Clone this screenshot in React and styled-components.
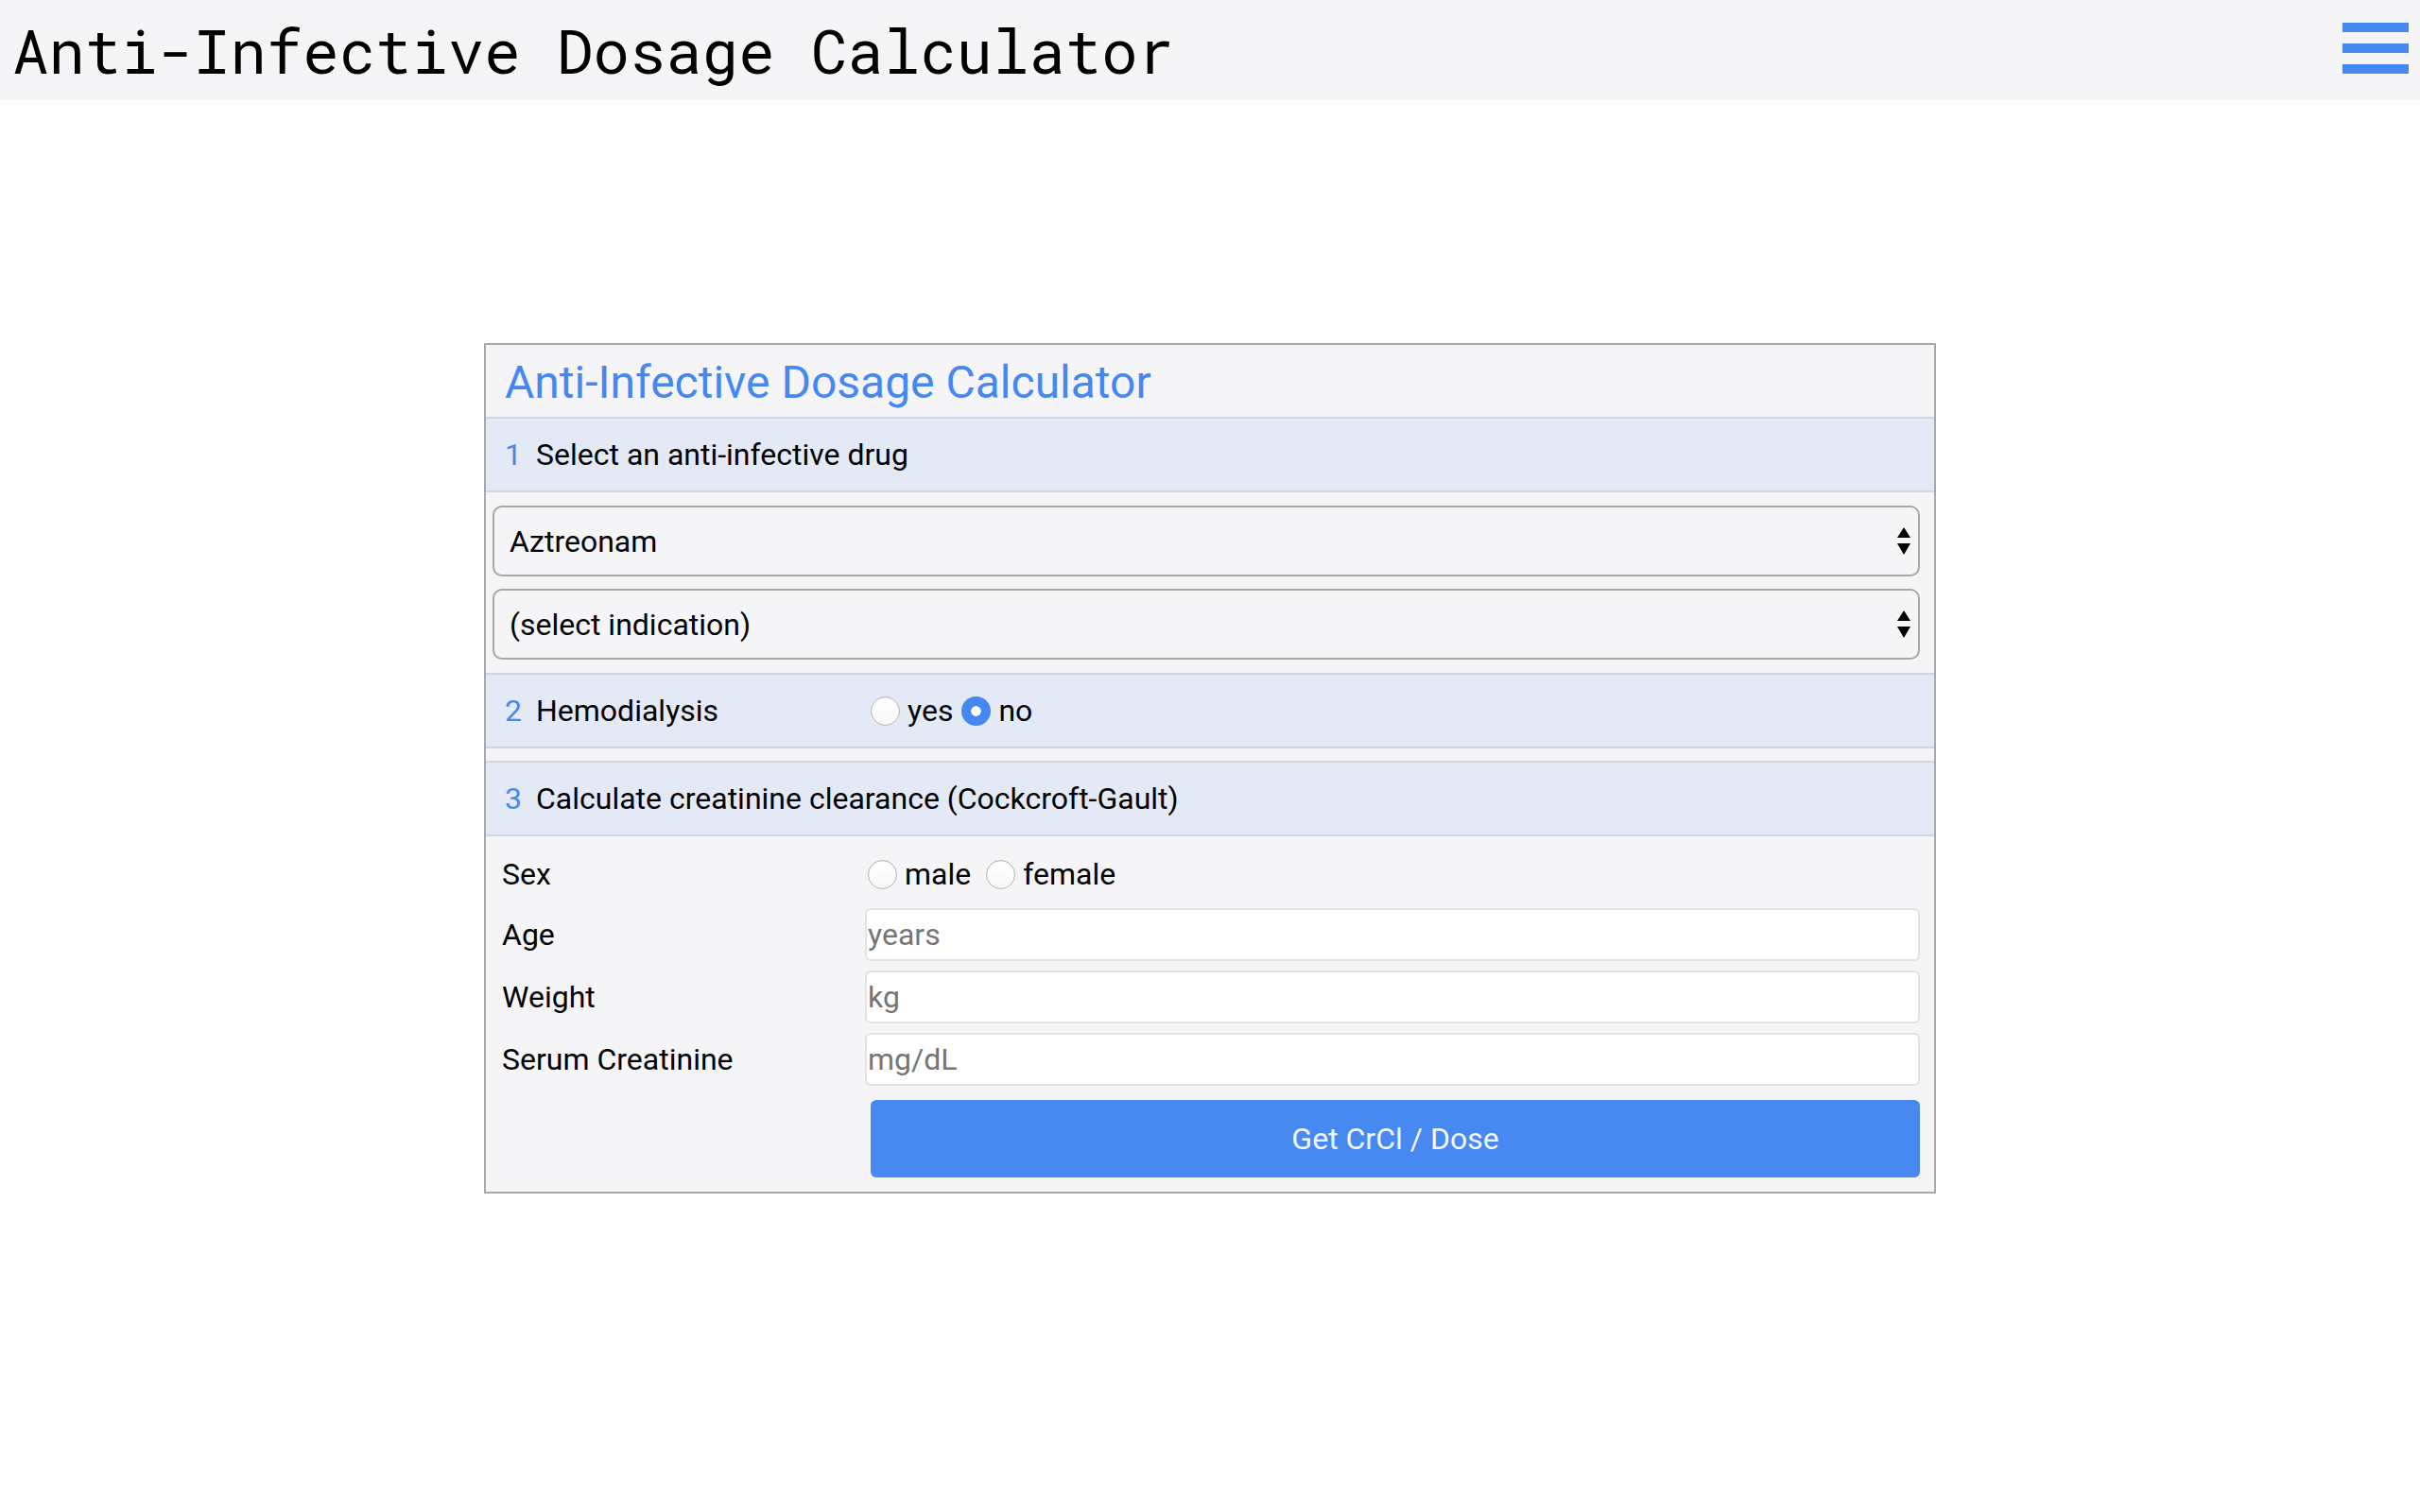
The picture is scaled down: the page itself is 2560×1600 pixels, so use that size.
import React, { useState } from 'react';
import styled, { createGlobalStyle } from 'styled-components';

const GlobalStyle = createGlobalStyle`
  body {
    margin: 0;
    background: #ffffff;
    font-family: Roboto, "Noto Sans", Arial, sans-serif;
    color: #000;
  }
  * { box-sizing: border-box; }
`;

const TopBar = styled.header`
  height: 106px;
  background: #f5f5f7;
  display: flex;
  align-items: center;
  justify-content: space-between;
  padding: 0 12px 0 13px;
`;

const AppTitle = styled.h1`
  margin: 0;
  font-family: "Roboto Mono", "Liberation Mono", "DejaVu Sans Mono", monospace;
  font-size: 64px;
  font-weight: 400;
  line-height: 1;
`;

const MenuButton = styled.button`
  border: none;
  background: none;
  padding: 0;
  margin-top: -4px;
  display: flex;
  cursor: pointer;
`;

const Main = styled.main`
  padding-top: 257px;
`;

const Card = styled.section`
  width: 1536px;
  margin: 0 auto;
  border: 2px solid #a9a9a9;
  background: #f5f5f7;
`;

const CardTitle = styled.h2`
  margin: 0;
  height: 76px;
  display: flex;
  align-items: center;
  padding: 2px 0 0 20px;
  font-size: 48px;
  font-weight: 400;
  color: #4688f1;
`;

const Band = styled.div`
  display: grid;
  grid-template-columns: 384px 1fr;
  align-items: center;
  height: 80px;
  margin-top: ${p => (p.$spaced ? '13px' : '0')};
  padding-left: 20px;
  background: #e3eaf6;
  border-top: 2px solid #cfd6e3;
  border-bottom: 2px solid #cfd6e3;
  font-size: 32px;
`;

const BandLabel = styled.div`
  display: flex;
  align-items: center;
  white-space: nowrap;
`;

const StepNum = styled.span`
  flex-shrink: 0;
  width: 33px;
  color: #4688f1;
`;

const SelectStack = styled.div`
  display: flex;
  flex-direction: column;
  gap: 13px;
  padding: 14px 15px 14px 7px;
`;

const SelectWrap = styled.div`
  position: relative;
`;

const Select = styled.select`
  appearance: none;
  -webkit-appearance: none;
  width: 100%;
  height: 75px;
  border: 2px solid #a7a7a7;
  border-radius: 10px;
  background: #f5f5f7;
  padding: 0 40px 0 16px;
  font-family: inherit;
  font-size: 32px;
  color: #000;
`;

const Arrows = styled.svg`
  position: absolute;
  right: 10px;
  top: 50%;
  transform: translateY(-50%);
  pointer-events: none;
`;

const RadioGroup = styled.div`
  display: flex;
  align-items: center;
  padding-left: 3px;
`;

const RadioLabel = styled.label`
  display: inline-flex;
  align-items: center;
  gap: 8px;
  margin-right: ${p => p.$space || '9px'};
  font-size: 32px;
  line-height: 1;
`;

const Radio = styled.input.attrs({ type: 'radio' })`
  appearance: none;
  -webkit-appearance: none;
  margin: 0;
  width: 31px;
  height: 31px;
  border-radius: 50%;
  border: 1.5px solid #b6b6b6;
  background: linear-gradient(#ffffff, #f7f7f7);
  box-shadow: inset 0 1px 1px rgba(0, 0, 0, 0.06);
  &:checked {
    border: none;
    background: radial-gradient(circle, #ffffff 0 5px, #4688f1 5.5px);
    box-shadow: none;
  }
`;

const Fields = styled.div`
  display: grid;
  grid-template-columns: 384px 1fr;
  row-gap: 10px;
  align-items: center;
  padding: 14px 15px 15px 17px;
`;

const FieldLabel = styled.div`
  font-size: 32px;
  min-height: ${p => (p.$tall ? '52px' : 'auto')};
  display: flex;
  align-items: center;
`;

const TextInput = styled.input`
  height: 56px;
  width: 100%;
  border: 2px solid #e3e3e5;
  border-radius: 6px;
  background: #fff;
  padding: 0 0 0 1px;
  font-family: inherit;
  font-size: 32px;
  color: #000;
  &::placeholder { color: #767676; }
`;

const SubmitButton = styled.button`
  grid-column: 2;
  margin: 5px 0 0 6px;
  height: 82px;
  border: none;
  border-radius: 6px;
  background: #4789f0;
  color: #f4f7fe;
  font-family: inherit;
  font-size: 32px;
  cursor: pointer;
`;

const drugs = ['Aztreonam', 'Cefazolin', 'Cefepime', 'Ceftriaxone', 'Meropenem', 'Vancomycin'];

const SelectArrows = () => (
  <Arrows width="14" height="30" viewBox="0 0 14 30">
    <polygon points="0,11 7,0 14,11" fill="#000" />
    <polygon points="0,17 14,17 7,29" fill="#000" />
  </Arrows>
);

const App = () => {
  const [dialysis, setDialysis] = useState('no');
  const [sex, setSex] = useState('');

  return (
    <>
      <GlobalStyle />
      <TopBar>
        <AppTitle>Anti-Infective Dosage Calculator</AppTitle>
        <MenuButton aria-label="menu">
          <svg width="70" height="54" viewBox="0 0 70 54">
            <rect x="0" y="0" width="70" height="10" fill="#4688f1" />
            <rect x="0" y="22" width="70" height="10" fill="#4688f1" />
            <rect x="0" y="44" width="70" height="10" fill="#4688f1" />
          </svg>
        </MenuButton>
      </TopBar>
      <Main>
        <Card>
          <CardTitle>Anti-Infective Dosage Calculator</CardTitle>
          <Band>
            <BandLabel><StepNum>1</StepNum>Select an anti-infective drug</BandLabel>
          </Band>
          <SelectStack>
            <SelectWrap>
              <Select defaultValue="Aztreonam">
                {drugs.map(d => <option key={d}>{d}</option>)}
              </Select>
              <SelectArrows />
            </SelectWrap>
            <SelectWrap>
              <Select defaultValue="">
                <option value="">(select indication)</option>
              </Select>
              <SelectArrows />
            </SelectWrap>
          </SelectStack>
          <Band>
            <BandLabel><StepNum>2</StepNum>Hemodialysis</BandLabel>
            <RadioGroup>
              <RadioLabel>
                <Radio name="hd" checked={dialysis === 'yes'} onChange={() => setDialysis('yes')} />yes
              </RadioLabel>
              <RadioLabel>
                <Radio name="hd" checked={dialysis === 'no'} onChange={() => setDialysis('no')} />no
              </RadioLabel>
            </RadioGroup>
          </Band>
          <Band $spaced>
            <BandLabel><StepNum>3</StepNum>Calculate creatinine clearance (Cockcroft-Gault)</BandLabel>
          </Band>
          <Fields>
            <FieldLabel $tall>Sex</FieldLabel>
            <RadioGroup>
              <RadioLabel $space="16px">
                <Radio name="sex" checked={sex === 'male'} onChange={() => setSex('male')} />male
              </RadioLabel>
              <RadioLabel>
                <Radio name="sex" checked={sex === 'female'} onChange={() => setSex('female')} />female
              </RadioLabel>
            </RadioGroup>
            <FieldLabel>Age</FieldLabel>
            <TextInput placeholder="years" />
            <FieldLabel>Weight</FieldLabel>
            <TextInput placeholder="kg" />
            <FieldLabel>Serum Creatinine</FieldLabel>
            <TextInput placeholder="mg/dL" />
            <SubmitButton>Get CrCl / Dose</SubmitButton>
          </Fields>
        </Card>
      </Main>
    </>
  );
};

export default App;
